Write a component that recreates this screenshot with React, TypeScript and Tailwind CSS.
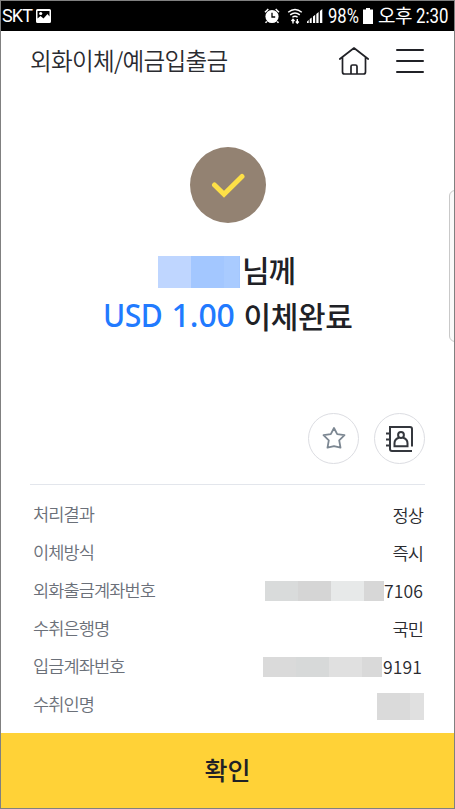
import type { ReactNode } from 'react';

const KR = "font-['Noto_Sans_CJK_KR',sans-serif]";

function Mask({ blocks, height }: { blocks: [number, string][]; height: number }) {
  return (
    <span className="flex" style={{ height }}>
      {blocks.map(([width, background], i) => (
        <span key={i} style={{ width, background }} />
      ))}
    </span>
  );
}

function Row({ label, children }: { label: string; children: ReactNode }) {
  return (
    <div className="flex h-[38px] items-center justify-between pl-[3px] text-[17.6px] leading-[38px] whitespace-nowrap">
      <dt className="pb-[2px] leading-[36px] font-[350] tracking-[-0.95px] text-[#6b7079]">{label}</dt>
      <dd className="flex items-center font-[350] tracking-[-0.95px] text-[#2a2b30]">{children}</dd>
    </div>
  );
}

function StatusBar() {
  return (
    <div className="flex h-[30px] shrink-0 items-center bg-black pl-px font-['Roboto',sans-serif] text-white">
      <span className="w-[34px] text-[18px] leading-[30px] tracking-[-0.9px]">SKT</span>
      <svg width="15" height="14" viewBox="0 0 15 14" className="shrink-0">
        <path fillRule="evenodd" fill="#fff" d="M1.5 0h12A1.5 1.5 0 0 1 15 1.5v11a1.5 1.5 0 0 1-1.5 1.5h-12A1.5 1.5 0 0 1 0 12.500v-11A1.5 1.5 0 0 1 1.500 0ZM1.500 2v7.500L4.500 7l3 2.500L11.500 5l2 2.500V2Z" />
        <circle cx="4.700" cy="4.500" r="1.600" fill="#fff" />
      </svg>
      <svg width="64" height="20" viewBox="0 0 64 20" className="ml-[213px] shrink-0" fill="none">
        <circle cx="8" cy="10.500" r="6.600" fill="#fff" />
        <path d="M8 6.700v4.300h3.200" stroke="#000" strokeWidth="1.300" />
        <path d="M1 6.200 4.300 3M15 6.200 11.700 3M2.800 15.500l-1.300 1.300M13.200 15.500l1.300 1.300" stroke="#fff" strokeWidth="1.500" />
        <g stroke="#fff" strokeWidth="1.400">
          <path d="M24.200 6.200q6.800-5.400 13.600 0M26.200 8.900q4.800-3.800 9.600 0M28.400 11.300q2.600-2 5.200 0" />
          <path d="M29 17.500v-4M27.500 15 29 13.300l1.500 1.700M33.300 13v4M31.800 15.500l1.500 1.700 1.500-1.700" />
        </g>
        <g fill="#fff">
          <path d="M43 17v-1.500l1.700-1.400V17ZM45.700 17v-4l2-1.500V17ZM49 17v-6.500l2.200-1.700V17ZM52.300 17V8l2.300-2V17ZM55.900 17V5l2.400-2v14Z" />
        </g>
      </svg>
      <span className="w-[35px] origin-left scale-x-[.83] text-[20px] leading-[30px] whitespace-nowrap">98%</span>
      <svg width="10" height="16" viewBox="0 0 10 16" className="shrink-0" fill="#fff">
        <path d="M3 0h4v1.500h3V16H0V1.500h3Z" />
      </svg>
      <span className={`${KR} ml-[5px] w-[38px] pb-[3px] text-[19px] leading-[27px] tracking-[-0.5px] whitespace-nowrap`}>오후</span>
      <span className="w-[34px] origin-left scale-x-[.84] text-[20px] leading-[30px] whitespace-nowrap">2:30</span>
    </div>
  );
}

export default function App() {
  return (
    <div className={`${KR} relative flex h-[809px] w-[455px] flex-col overflow-hidden border border-[#808080] bg-white`}>
      <StatusBar />
      <header className="flex h-[62px] shrink-0 items-center pr-[30px] pl-[29px]">
        <h1 className="flex-1 pb-[3px] text-[23.6px] leading-[59px] font-[350] tracking-[-0.7px] whitespace-nowrap text-[#2a2b30]">
          외화이체/예금입출금
        </h1>
        <svg width="32" height="30" viewBox="0 0 32 30" className="-translate-y-px" fill="none" stroke="#202126" strokeWidth="1.700" strokeLinecap="round" strokeLinejoin="round">
          <path d="M1.800 13 16 2l14.200 11M4.500 11.300V26a2 2 0 0 0 2 2h19a2 2 0 0 0 2-2V11.300M13 28v-7.500a1.500 1.500 0 0 1 1.500-1.500h3a1.500 1.500 0 0 1 1.500 1.500V28" />
        </svg>
        <div className="mb-[2px] ml-[26px] flex h-[24px] w-[28px] flex-col justify-between">
          <span className="h-[2px] rounded bg-[#202126]" />
          <span className="h-[2px] rounded bg-[#202126]" />
          <span className="h-[2px] rounded bg-[#202126]" />
        </div>
      </header>

      <section className="flex h-[320px] shrink-0 flex-col items-center pt-[54px]">
        <div className="flex size-[76px] items-center justify-center rounded-full bg-[#938272]">
          <svg width="34" height="26" viewBox="0 0 34 26" fill="none" stroke="#fde047" strokeWidth="5" strokeLinecap="round">
            <path d="m3.500 13 9.500 9.200L31 4.500" />
          </svg>
        </div>
        <div className="mt-[26px] mr-[2px] flex h-[46px] items-center text-[30px] leading-[46px] font-medium tracking-[-1px] text-[#202126]">
          <Mask height={32} blocks={[[33, '#bfd6ff'], [33, '#a3c7ff'], [15, '#a9cbff'], [1, '#a3c7ff']]} />
          <span className="ml-[2px] pb-[6px] leading-[40px]">님께</span>
        </div>
        <div className="flex h-[46px] items-center pb-[6px] text-[30px] leading-[40px] font-medium whitespace-nowrap text-[#202126]">
          <span className="flex gap-[10px] font-['Noto_Sans',sans-serif] text-[32px] font-medium text-[#217aff]">
            <span className="w-[59px] origin-left scale-x-[.94] tracking-[-0.5px]">USD</span>
            <span className="w-[63px] tracking-[-0.1px]">1.00</span>
          </span>
          <span className="ml-[9px] tracking-[-0.4px]">이체완료</span>
        </div>
      </section>

      <div className="mx-[29px] flex h-[72px] shrink-0 justify-end gap-[15px] border-b border-[#e3e6ec]">
        <span className="flex size-[51px] items-center justify-center rounded-full border border-[#dcdde2]">
          <svg width="24" height="24" viewBox="0 0 24 24" className="-translate-y-px" fill="none" stroke="#7c8792" strokeWidth="1.800" strokeLinejoin="round">
            <path d="m12 2 3.200 6.200 7.300 1-5.300 5.100 1.300 7.400L12 20.200 5.500 21.700l1.300-7.400L1.500 9.200l7.300-1Z" />
          </svg>
        </span>
        <span className="flex size-[51px] items-center justify-center rounded-full border border-[#dcdde2]">
          <svg width="28" height="26" viewBox="0 0 28 26" className="-translate-x-px" fill="none" stroke="#34373d" strokeWidth="2">
            <path d="M27 20.500V3A2 2 0 0 0 25 1H5V23a2 2 0 0 0 2 2h20M1 7.500h4M1 13.500h4M1 19.500h4" />
            <circle cx="16" cy="9" r="2.900" />
            <path d="M13.800 11.800c-2.800 1-4.300 3-4.300 5.500v3h13v-3c0-2.500-1.500-4.500-4.300-5.500" />
          </svg>
        </span>
      </div>

      <dl className="mr-[31px] ml-[29px] h-[248px] shrink-0 pt-[11px]">
        <Row label="처리결과">정상</Row>
        <Row label="이체방식">즉시</Row>
        <Row label="외화출금계좌번호">
          <Mask height={20} blocks={[[33, '#d9dbdb'], [33, '#d5d5d5'], [33, '#e7e9e9'], [20, '#d7d7d7']]} />
          <span className="w-[39px] tracking-[0.05px]">7106</span>
        </Row>
        <Row label="수취은행명">국민</Row>
        <Row label="입금계좌번호">
          <Mask height={20} blocks={[[33, '#dadada'], [33, '#d7d9d9'], [33, '#e0e0e0'], [20, '#d9d9d9']]} />
          <span className="ml-px w-[40px] tracking-[0.05px]">9191</span>
        </Row>
        <Row label="수취인명">
          <span className="-mr-px mt-[2px]">
            <Mask height={27} blocks={[[33, '#dadada'], [14, '#e0e0e0']]} />
          </span>
        </Row>
      </dl>

      <button className="flex-1 bg-[#ffd237] pb-[4px] text-center text-[25px] leading-[70px] font-medium text-[#202126]">
        확인
      </button>
      <div className="absolute top-[189px] right-[-8px] h-[152px] w-[13px] rounded-[6px] border border-[#c9c9c9] bg-[#fafafa]" />
    </div>
  );
}
